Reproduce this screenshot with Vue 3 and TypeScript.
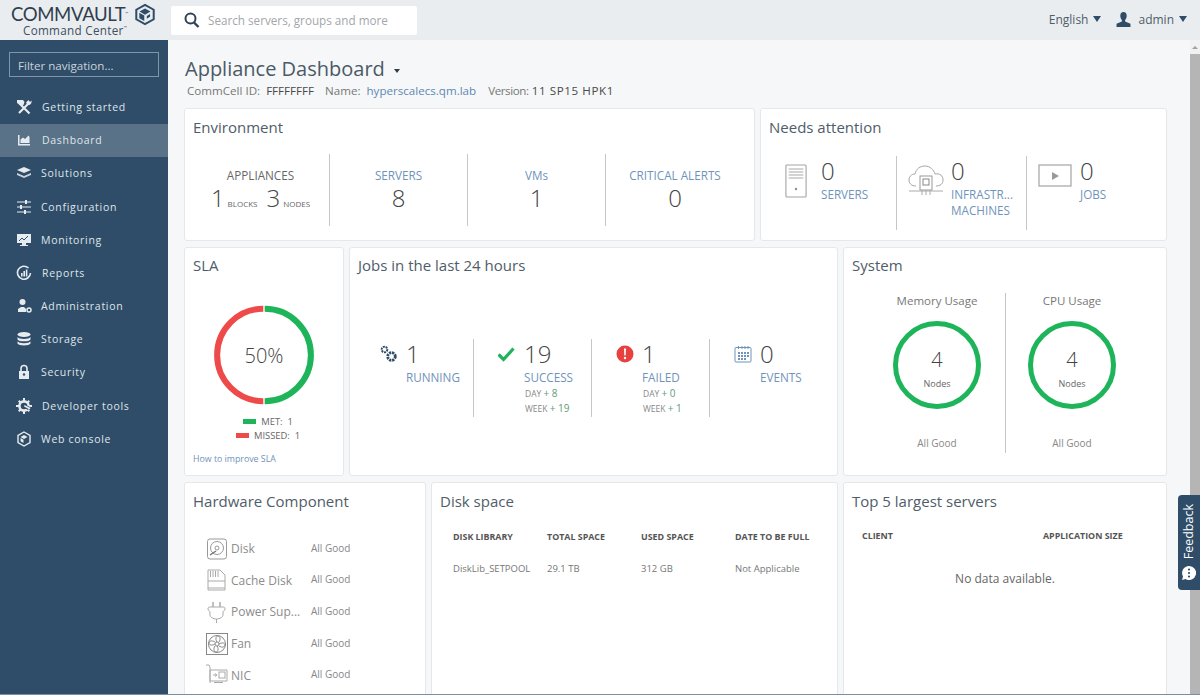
<script setup lang="ts">
interface Nav { label: string; icon: string; active?: boolean; indent?: boolean }

const navIcons: Record<string, string> = {
  tools: '<path d="M3.500 4.500L13.500 14.500M12.500 4.500L3 14" stroke="#e6ebef" stroke-width="2.200" fill="none"/><path d="M1 1h6l1.500 2-1 3H4L1 4zM15.500 1.500c.5 2.500-1 5-4 4.500L10 3.500 12.500 1l1.500 2z" fill="#e6ebef"/>',
  chart: '<path d="M2 3h1.500v9H14v1.500H2zM4.500 11V7.500L7 5.500l2 1.500 3.500-3.500 1 1.500v6z" fill="#e6ebef"/>',
  layers: '<path d="M8 2l7 3-7 3-7-3z" fill="#e6ebef"/><path d="M1 8l7 3 7-3v2l-7 3-7-3z" fill="#c9d3db"/>',
  sliders: '<path d="M1 3h14M1 8h14M1 13h14" stroke="#e6ebef" stroke-width="1.200"/><path d="M9 1h2v4H9zM4 6h2v4H4zM8 11h2v4H8z" fill="#e6ebef"/>',
  monitor: '<path d="M1 2h14v9H1z" fill="#e6ebef"/><path d="M3 9l3-3 2 2 4-4" stroke="#2f4d68" fill="none"/><path d="M6 11h4v2h2v1H4v-1h2z" fill="#e6ebef"/>',
  reports: '<path d="M12.500 3A6.500 6.500 0 1 0 14.500 8" fill="none" stroke="#e6ebef" stroke-width="1.600"/><path d="M5 8h1.600v3.500H5zM7.400 6h1.600v5.500H7.400zM9.800 4.500h1.600v7H9.800z" fill="#e6ebef"/>',
  admin: '<circle cx="6.500" cy="4" r="3" fill="#e6ebef"/><path d="M2 14v-3l3-2h3l2 2v3z" fill="#e6ebef"/><circle cx="13" cy="12" r="2" fill="none" stroke="#e6ebef" stroke-width="1.500"/>',
  storage: '<ellipse cx="8" cy="3.500" rx="6.500" ry="2.500" fill="#e6ebef"/><path d="M1.500 6c1 2.600 12 2.600 13 0v2.400c-1 2.600-12 2.600-13 0zM1.500 10.200c1 2.600 12 2.600 13 0v2.400c-1 2.600-12 2.600-13 0z" fill="#e6ebef"/>',
  lock: '<path d="M5 7V4.500a3 3 0 0 1 6 0V7" fill="none" stroke="#e6ebef" stroke-width="1.600"/><path d="M3 7h10v8H3z" fill="#e6ebef"/><circle cx="8" cy="10.500" r="1.200" fill="#2f4d68"/>',
  gear: '<circle cx="8" cy="8" r="4.600" fill="none" stroke="#e6ebef" stroke-width="2.600"/><path d="M7 0h2v3H7zM7 13h2v3H7zM0 7h3v2H0zM13 7h3v2h-3zM2 3.400l1.400-1.400 2 2L4 5.400zM10.600 12l1.400-1.400 2 2-1.400 1.400zM2 12.600L4 10.600l1.400 1.400-2 2zM10.600 4l2-2L14 3.400l-2 2z" fill="#e6ebef"/><path d="M8 6l6 3-2 3-5-3z" fill="#2f4d68"/><path d="M8.500 7l6 3-1 1.500-5.500-3z" fill="#e6ebef"/>',
  cube: '<path d="M8 1l6 3.500v7L8 15l-6-3.500v-7z" fill="none" stroke="#e6ebef" stroke-width="1.400"/><path d="M8 4l3.500 2-3.500 2-3.500-2zM4.500 7l3 1.800v3.200l-3-1.800z" fill="#e6ebef"/>',
}

const navItems: Nav[] = [
  { label: 'Getting started', icon: 'tools', indent: true },
  { label: 'Dashboard', icon: 'chart', active: true, indent: true },
  { label: 'Solutions', icon: 'layers' },
  { label: 'Configuration', icon: 'sliders' },
  { label: 'Monitoring', icon: 'monitor' },
  { label: 'Reports', icon: 'reports', indent: true },
  { label: 'Administration', icon: 'admin' },
  { label: 'Storage', icon: 'storage' },
  { label: 'Security', icon: 'lock' },
  { label: 'Developer tools', icon: 'gear', indent: true },
  { label: 'Web console', icon: 'cube' },
]

const envStats = [
  { label: 'SERVERS', value: '8' },
  { label: 'VMs', value: '1' },
  { label: 'CRITICAL ALERTS', value: '0' },
]

const systemStats = [
  { title: 'Memory Usage' },
  { title: 'CPU Usage' },
]

const hardware = [
  { name: 'Disk', icon: 'disk' },
  { name: 'Cache Disk', icon: 'cache' },
  { name: 'Power Sup...', icon: 'plug' },
  { name: 'Fan', icon: 'fan' },
  { name: 'NIC', icon: 'nic' },
]

const hwIcons: Record<string, string> = {
  disk: '<rect x="1.500" y="1" width="19" height="20" rx="2.500" fill="none" stroke="#999" /><circle cx="11" cy="10" r="6.500" fill="none" stroke="#999"/><circle cx="11" cy="10" r="2" fill="none" stroke="#999"/><path d="M4 17l6-4" stroke="#777" stroke-width="1.500"/>',
  cache: '<path d="M2 1h12l5 5v15H2z" fill="none" stroke="#aaa"/><path d="M4.500 2v6M7 2v6M9.500 2v6M12 2v6M2 12h17M2 19h17" stroke="#aaa"/>',
  plug: '<path d="M7 1v5M14 1v5" stroke="#aaa" stroke-width="1.500"/><path d="M2 8c0-2 1-2 3-2h11c2 0 3 0 3 2s-2 2-2 3v3c0 2-3 4-6.500 4S4 16 4 14v-3C4 10 2 10 2 8z" fill="none" stroke="#aaa"/><path d="M10.500 18v4" stroke="#aaa"/>',
  fan: '<rect x="0.500" y="0.500" width="21" height="21" fill="none" stroke="#888"/><circle cx="11" cy="11" r="8.500" fill="none" stroke="#888"/><circle cx="11" cy="11" r="2" fill="none" stroke="#888"/><path d="M11 9c-2-3-1-6 1-6s3 3 1 6M13 11c3-2 6-1 6 1s-3 3-6 1M11 13c2 3 1 6-1 6s-3-3-1-6M9 11c-3 2-6 1-6-1s3-3 6-1" fill="none" stroke="#888"/>',
  nic: '<path d="M0 1h3l1 2v16" fill="none" stroke="#aaa"/><path d="M4 6h17v11H4z" fill="none" stroke="#aaa"/><rect x="13" y="8" width="6" height="6" fill="none" stroke="#aaa"/><path d="M7 11h3M9 9.500l2 1.500-2 1.500M8 18.500h9" stroke="#aaa" fill="none"/>',
}
</script>

<template>
  <div class="app">
    <header class="topbar">
      <div class="brand">
        <div class="brand-text">
          <span class="brand-name">COMMVAULT<sup>™</sup></span>
          <span class="brand-sub">Command Center<sup>™</sup></span>
        </div>
        <svg class="brand-mark" viewBox="0 0 24 24" width="22" height="23">
          <path d="M12 1.500l9.500 5.300v10.400L12 22.500l-9.500-5.300V6.800z" fill="none" stroke="#2f4d68" stroke-width="2.200"/>
          <path d="M12 5.500l6 3.300-6 3.400-6-3.400z" fill="#2f4d68"/>
          <path d="M5.800 10l5.400 3.100v6l-5.400-3.100z" fill="#2f4d68"/>
          <path d="M14 13.500l3.500-2v3l-3.500 2z" fill="#2f4d68"/>
        </svg>
      </div>
      <div class="search">
        <svg viewBox="0 0 16 16" width="16" height="16">
          <circle cx="6.500" cy="6.500" r="5" fill="none" stroke="#2f4358" stroke-width="2"/>
          <path d="M10 10.500l4.500 4.500" stroke="#2f4358" stroke-width="2.400"/>
        </svg>
        <span>Search servers, groups and more</span>
      </div>
      <div class="top-right">
        <span class="top-label">English</span>
        <span class="tri"></span>
        <svg class="user" viewBox="0 0 14 14" width="15" height="15">
          <path d="M7 0c2 0 3 1.500 3 3.500S9 7 8.500 7.500v1.300L13.500 11v3H.5v-3l5-2.200V7.500C5 7 4 5.500 4 3.500S5 0 7 0z" fill="#2f4d68"/>
        </svg>
        <span class="top-label">admin</span>
        <span class="tri"></span>
      </div>
    </header>

    <div class="body">
      <aside class="sidebar">
        <div class="filter">Filter navigation...</div>
        <nav class="nav">
          <div
            v-for="item in navItems"
            :key="item.label"
            class="nav-item"
            :class="{ active: item.active, indent: item.indent }"
          >
            <svg class="nav-icon" viewBox="0 0 16 16" width="16" height="16" v-html="navIcons[item.icon]"></svg>
            <span>{{ item.label }}</span>
          </div>
        </nav>
      </aside>

      <main class="content">
        <div class="page-head">
          <h1>Appliance Dashboard <span class="caret"></span></h1>
          <p>
            <span>CommCell ID:</span><b>FFFFFFFF</b>
            <span>Name:</span><a>hyperscalecs.qm.lab</a>
            <span class="ver-label">Version:</span><b class="ver">11 SP15 HPK1</b>
          </p>
        </div>

        <section class="row row-1">
          <div class="card env">
            <h2>Environment</h2>
            <div class="env-cols">
              <div class="env-col">
                <div class="env-label plain">APPLIANCES</div>
                <div class="env-value">
                  1<small>BLOCKS</small><span class="spaced">3</span><small>NODES</small>
                </div>
              </div>
              <div v-for="s in envStats" :key="s.label" class="env-col">
                <div class="env-label">{{ s.label }}</div>
                <div class="env-value">{{ s.value }}</div>
              </div>
            </div>
          </div>

          <div class="card needs">
            <h2>Needs attention</h2>
            <div class="needs-cols">
              <div class="needs-col first">
                <svg viewBox="0 0 24 34" width="22" height="34" preserveAspectRatio="none">
                  <rect x="1" y="1" width="22" height="32" rx="1" fill="none" stroke="#a4a4a4" stroke-width="1.200"/>
                  <path d="M4 5h16M4 8h16M4 11h16M4 14h16" stroke="#a4a4a4"/>
                  <circle cx="12" cy="25" r="1.200" fill="#888"/>
                </svg>
                <div>
                  <div class="needs-num">0</div>
                  <div class="link-label">SERVERS</div>
                </div>
              </div>
              <div class="needs-col second">
                <svg viewBox="0 0 36 32" width="36" height="32">
                  <path d="M8 22c-5 0-7-3-7-6s2-6 6-6c1-5 5-8 10-8s9 4 10 8c5-1 8 2 8 6s-3 6-7 6" fill="none" stroke="#a4a4a4"/>
                  <rect x="12" y="12" width="12" height="14" fill="#fff" stroke="#999"/>
                  <rect x="15" y="15" width="6" height="6" fill="none" stroke="#888"/>
                  <path d="M1 27h34M14 26v5M18 26v5M22 26v5" stroke="#aaa"/>
                </svg>
                <div>
                  <div class="needs-num">0</div>
                  <div class="link-label wrap">INFRASTR...<br />MACHINES</div>
                </div>
              </div>
              <div class="needs-col third">
                <svg viewBox="0 0 34 24" width="34" height="24">
                  <rect x="1" y="1" width="32" height="21" fill="none" stroke="#a4a4a4" stroke-width="1.200"/>
                  <path d="M14 8l7 4-7 4z" fill="#999"/>
                </svg>
                <div>
                  <div class="needs-num">0</div>
                  <div class="link-label">JOBS</div>
                </div>
              </div>
            </div>
          </div>
        </section>

        <section class="row row-2">
          <div class="card sla">
            <h2>SLA</h2>
            <div class="ring-wrap">
              <svg viewBox="0 0 100 100" width="100" height="100">
                <path d="M50.700 3.800a46.200 46.200 0 0 1 0 92.400" fill="none" stroke="#1db45a" stroke-width="6"/>
                <path d="M49.300 96.200a46.200 46.200 0 0 1 0-92.400" fill="none" stroke="#ef4a4a" stroke-width="6"/>
              </svg>
              <span class="ring-text">50%</span>
            </div>
            <div class="legend">
              <div><i class="met"></i>MET:&nbsp; 1</div>
              <div><i class="missed"></i>MISSED:&nbsp; 1</div>
            </div>
            <a class="sla-link">How to improve SLA</a>
          </div>

          <div class="card jobs">
            <h2>Jobs in the last 24 hours</h2>
            <div class="jobs-cols">
              <div class="job">
                <svg viewBox="0 0 18 18" width="18" height="18">
                  <circle cx="4.500" cy="4.500" r="2.800" fill="none" stroke="#2f4d68" stroke-width="2" stroke-dasharray="2 .8"/>
                  <circle cx="11.500" cy="11.500" r="3.800" fill="none" stroke="#2f4d68" stroke-width="2.800" stroke-dasharray="2.200 .8"/>
                </svg>
                <div>
                  <div class="job-num">1</div>
                  <div class="link-label">RUNNING</div>
                </div>
              </div>
              <div class="job">
                <svg viewBox="0 0 18 18" width="18" height="18">
                  <path d="M.5 9.500l5 5L15.500 3.500" fill="none" stroke="#1db45a" stroke-width="3.200"/>
                </svg>
                <div>
                  <div class="job-num">19</div>
                  <div class="link-label">SUCCESS</div>
                  <div class="delta">DAY <em>+ 8</em></div>
                  <div class="delta">WEEK <em>+ 19</em></div>
                </div>
              </div>
              <div class="job">
                <svg viewBox="0 0 18 18" width="18" height="18">
                  <circle cx="9" cy="9" r="8.500" fill="#e8403f"/>
                  <path d="M8 3.500h2l-.3 7H8.300z" fill="#fff"/>
                  <circle cx="9" cy="13" r="1.200" fill="#fff"/>
                </svg>
                <div>
                  <div class="job-num">1</div>
                  <div class="link-label">FAILED</div>
                  <div class="delta">DAY <em>+ 0</em></div>
                  <div class="delta">WEEK <em>+ 1</em></div>
                </div>
              </div>
              <div class="job">
                <svg viewBox="0 0 18 18" width="18" height="18">
                  <rect x="1" y="2.500" width="16" height="14.500" rx="1" fill="none" stroke="#6f93bb"/>
                  <path d="M4.500 1v3M8 1v3M11 1v3M14 1v3" stroke="#6f93bb"/>
                  <path d="M4 7h2v2H4zM7 7h2v2H7zM10 7h2v2h-2zM13 7h2v2h-2zM4 10h2v2H4zM7 10h2v2H7zM10 10h2v2h-2zM13 10h2v2h-2zM4 13h2v2H4zM7 13h2v2H7zM10 13h2v2h-2z" fill="#6f93bb"/>
                </svg>
                <div>
                  <div class="job-num">0</div>
                  <div class="link-label">EVENTS</div>
                </div>
              </div>
            </div>
          </div>

          <div class="card system">
            <h2>System</h2>
            <div class="sys-cols">
              <div v-for="s in systemStats" :key="s.title" class="sys-col">
                <div class="sys-title">{{ s.title }}</div>
                <div class="sys-ring">
                  <svg viewBox="0 0 88 88" width="88" height="88">
                    <circle cx="44" cy="44" r="41.500" fill="none" stroke="#1db45a" stroke-width="5"/>
                  </svg>
                  <div class="sys-ring-text"><strong>4</strong><span>Nodes</span></div>
                </div>
                <div class="sys-good">All Good</div>
              </div>
            </div>
          </div>
        </section>

        <section class="row row-3">
          <div class="card hw">
            <h2>Hardware Component</h2>
            <ul class="hw-list">
              <li v-for="h in hardware" :key="h.name">
                <svg viewBox="0 0 22 22" width="22" height="22" v-html="hwIcons[h.icon]"></svg>
                <span class="hw-name">{{ h.name }}</span>
                <span class="hw-status">All Good</span>
              </li>
            </ul>
          </div>

          <div class="card disk">
            <h2>Disk space</h2>
            <table class="tbl">
              <thead>
                <tr><th>DISK LIBRARY</th><th>TOTAL SPACE</th><th>USED SPACE</th><th>DATE TO BE FULL</th></tr>
              </thead>
              <tbody>
                <tr><td>DiskLib_SETPOOL</td><td>29.1 TB</td><td>312 GB</td><td>Not Applicable</td></tr>
              </tbody>
            </table>
          </div>

          <div class="card top5">
            <h2>Top 5 largest servers</h2>
            <div class="top5-head"><span>CLIENT</span><span>APPLICATION SIZE</span></div>
            <div class="top5-empty">No data available.</div>
          </div>
        </section>
      </main>

      <div class="scrollbar">
        <span class="scroll-arrow"></span>
        <div class="scroll-thumb"></div>
      </div>

      <div class="feedback">
        <span>Feedback</span>
        <svg viewBox="0 0 14 14" width="14" height="14">
          <path d="M7 0a7 7 0 1 1-3.500 13L0 14l1-3.500A7 7 0 0 1 7 0z" fill="#fff"/>
          <circle cx="7" cy="3.500" r="1.100" fill="#2f4d68"/>
          <circle cx="7" cy="7" r="1.100" fill="#2f4d68"/>
          <circle cx="7" cy="10.500" r="1.100" fill="#2f4d68"/>
        </svg>
      </div>
    </div>
  </div>
</template>

<style>
html, body { margin: 0; padding: 0; background: #f6f7f8; }
</style>

<style scoped>
.app {
  width: 1200px;
  height: 695px;
  display: flex;
  flex-direction: column;
  overflow: hidden;
  font-family: "Open Sans", "Noto Sans", sans-serif;
  color: #555;
}

/* top bar */
.topbar {
  height: 40px;
  flex: none;
  display: flex;
  align-items: center;
  background: #e9edf0;
}
.brand {
  width: 171px;
  align-self: stretch;
  flex: none;
  display: flex;
  align-items: flex-start;
  box-sizing: border-box;
  padding: 3px 0 0 11px;
}
.brand-text { display: flex; flex-direction: column; width: 118px; padding-top: 3px; }
.brand-name {
  font-family: "Lato", sans-serif;
  font-size: 18.600px;
  line-height: 16px;
  font-weight: 400;
  letter-spacing: -0.4px;
  color: #2f3e4d;
  white-space: nowrap;
}
.brand-sub {
  font-size: 11.700px;
  line-height: 13px;
  letter-spacing: 0.3px;
  color: #3e4f5e;
  margin: 2px 0 0 12px;
  white-space: nowrap;
}
.brand sup { font-size: 4px; line-height: 0; vertical-align: 6px; letter-spacing: 0; }
.brand-mark { margin: 0 0 0 5px; }
.search {
  width: 246px;
  height: 29px;
  background: #fff;
  border-radius: 2px;
  display: flex;
  align-items: center;
  gap: 8px;
  box-sizing: border-box;
  padding-left: 13px;
  font-size: 11.700px;
  color: #a3a7ab;
}
.top-right {
  margin-left: auto;
  padding: 0 13px 2px 0;
  display: flex;
  align-items: center;
  font-size: 12px;
  color: #4f5d69;
}
.tri {
  width: 0;
  height: 0;
  border-left: 4px solid transparent;
  border-right: 4px solid transparent;
  border-top: 6px solid #2f4d68;
  margin-left: 5px;
}
.user { margin: 0 7px 0 15px; }

.body {
  flex: 1;
  min-height: 0;
  display: flex;
  position: relative;
  border-bottom: 1px solid #7c8fa2;
}

/* sidebar */
.sidebar {
  width: 168px;
  flex: none;
  background: #2f4d68;
  box-sizing: border-box;
  padding-top: 12px;
}
.filter {
  margin: 0 9px;
  height: 25px;
  line-height: 25px;
  box-sizing: border-box;
  border: 1px solid #7f95a8;
  padding-left: 8px;
  font-size: 11.600px;
  color: #c9d3db;
}
.nav { margin-top: 13.400px; }
.nav-item {
  height: 33.200px;
  display: flex;
  align-items: center;
  padding-left: 16px;
  gap: 9px;
  font-size: 10.500px;
  letter-spacing: 0.7px;
  color: #dfe5ea;
}
.nav-item.indent { gap: 10px; }
.nav-item.active { background: #5a7288; }
.nav-icon { flex: none; }

/* content */
.content {
  flex: 1;
  min-width: 0;
  overflow: hidden;
  box-sizing: border-box;
  padding: 0 23px 0 16px;
  display: flex;
  flex-direction: column;
  gap: 6px;
  background: #f6f7f8;
}
.page-head { height: 62px; flex: none; padding-left: 1px; }
.page-head h1 {
  margin: 0;
  padding-top: 15px;
  font-size: 20px;
  line-height: 28px;
  font-weight: 400;
  color: #4b5a66;
}
.caret {
  display: inline-block;
  width: 0;
  height: 0;
  border-left: 3.500px solid transparent;
  border-right: 3.500px solid transparent;
  border-top: 4px solid #2f3e4d;
  vertical-align: middle;
  margin-left: 4px;
}
.page-head p {
  margin: 0 0 0 2px;
  font-size: 11.600px;
  line-height: 16px;
  color: #777;
}
.page-head p span { margin-right: 6px; }
.page-head p span.ver-label { letter-spacing: -0.4px; margin-right: 3px; }
.page-head p b { font-weight: 400; color: #4a4a4a; margin-right: 11px; }
.page-head p b.ver { letter-spacing: 0.6px; }
.page-head p a { color: #5f87b3; margin-right: 12px; }

.row { display: flex; gap: 5px; flex: none; }
.row-1 { height: 133px; }
.row-2 { height: 229px; }
.row-3 { height: 240px; }

.card {
  box-sizing: border-box;
  background: #fff;
  border: 1px solid #e6e7e8;
  border-radius: 3px;
  padding: 6px 8px;
  flex: none;
}
.row-2 .card { padding-top: 5px; }
.card h2 {
  margin: 0;
  font-size: 15px;
  line-height: 24px;
  font-weight: 400;
  color: #4f5d69;
}
.link-label { font-size: 11.700px; line-height: 16px; color: #6f93bb; }

/* environment */
.env { width: 571px; }
.env-cols { display: flex; margin-top: 15px; margin-left: -1px; }
.env-col {
  width: 138px;
  height: 72px;
  box-sizing: border-box;
  border-right: 1px solid #c4c7ca;
  text-align: center;
  padding-top: 13px;
}
.env-col:last-child { border-right: none; }
.env-label { font-size: 11.700px; line-height: 16px; color: #6f93bb; }
.env-label.plain { color: #666; }
.env-value { font-size: 24px; line-height: 30px; font-weight: 300; color: #444; }
.env-value small { font-size: 8px; font-weight: 400; margin-left: 3px; color: #666; }
.spaced { margin-left: 9px; }

/* needs */
.needs { width: 407px; }
.needs-cols { display: flex; margin-top: 17px; }
.needs-col {
  height: 74px;
  box-sizing: border-box;
  display: flex;
  align-items: flex-start;
  gap: 14px;
  border-right: 1px solid #c4c7ca;
}
.needs-col svg { margin-top: 8px; flex: none; }
.needs-col.first { width: 128px; padding-left: 16px; }
.needs-col.second { width: 130px; padding-left: 11px; gap: 7px; }
.needs-col.third { border-right: none; padding-left: 11px; gap: 8px; }
.needs-num { font-size: 24px; line-height: 31px; margin-top: -1px; font-weight: 300; color: #444; }
.link-label.wrap { line-height: 16px; }

/* SLA */
.sla { width: 160px; position: relative; }
.ring-wrap { position: relative; width: 100px; height: 100px; margin: 28px auto 0; }
.ring-text {
  position: absolute;
  inset: 0;
  display: flex;
  align-items: center;
  justify-content: center;
  font-size: 20px;
  font-weight: 300;
  color: #444;
}
.legend { margin-top: 10px; padding-left: 8px; font-size: 9.400px; line-height: 14px; color: #666; text-align: center; }
.legend i { display: inline-block; width: 13px; height: 5px; margin-right: 5px; vertical-align: 1px; }
.legend .met { background: #1db45a; }
.legend .missed { background: #ef4a4a; }
.sla-link { display: block; margin-top: 9px; font-size: 8.800px; line-height: 14px; color: #6f93bb; }

/* jobs */
.jobs { width: 489px; }
.jobs-cols { display: flex; margin-top: 62px; margin-left: -2px; }
.job {
  width: 118px;
  height: 78px;
  box-sizing: border-box;
  display: flex;
  align-items: flex-start;
  padding-left: 24px;
  gap: 8px;
  border-right: 1px solid #c4c7ca;
}
.job:last-child { border-right: none; }
.job svg { margin-top: 6px; flex: none; }
.job-num { font-size: 24px; line-height: 30px; font-weight: 300; color: #444; }
.delta { font-size: 8.500px; line-height: 15px; color: #888; padding-left: 1px; }
.delta em { font-style: normal; font-size: 10px; color: #5e9c7a; }
.job .link-label { line-height: 17px; }

/* system */
.system { width: 324px; }
.sys-cols { display: flex; margin-top: 16px; }
.sys-col {
  height: 160px;
  box-sizing: border-box;
  display: flex;
  flex-direction: column;
  align-items: center;
}
.sys-col:first-child { border-right: 1px solid #c4c7ca; width: 154px; padding-left: 17px; }
.sys-col:last-child { width: 132px; }
.sys-title { font-size: 11.500px; line-height: 16px; color: #777; }
.sys-ring { position: relative; width: 88px; height: 88px; margin-top: 12px; }
.sys-ring-text {
  position: absolute;
  inset: 0;
  display: flex;
  flex-direction: column;
  align-items: center;
  padding-top: 26px;
}
.sys-ring-text strong { font-size: 20px; line-height: 26px; font-weight: 300; color: #444; }
.sys-ring-text span { font-size: 9px; line-height: 12px; margin-top: 5px; color: #666; }
.sys-good { margin-top: 27px; font-size: 10px; line-height: 14px; color: #888; }

/* hardware */
.hw { width: 242px; }
.hw-list { list-style: none; margin: 20px 0 0 13px; padding: 0; }
.hw-list li { height: 31.600px; display: flex; align-items: center; }
.hw-list svg { flex: none; width: 22px; }
.hw-name { width: 80px; margin-left: 3px; font-size: 12px; color: #8c8c8c; white-space: nowrap; }
.hw-status { font-size: 10px; color: #888; padding-bottom: 2px; }

/* disk */
.disk { width: 407px; }
.tbl { border-collapse: collapse; margin: 15px 0 0 13px; table-layout: fixed; width: 376px; }
.tbl th {
  text-align: left;
  font-size: 8.900px;
  font-weight: 700;
  color: #555;
  padding: 0;
  height: 16px;
  width: 94px;
  white-space: nowrap;
}
.tbl td {
  font-size: 9.500px;
  color: #777;
  padding: 18px 0 0;
  white-space: nowrap;
}

/* top 5 */
.top5 { width: 324px; }
.top5-head {
  display: flex;
  margin: 15px 0 0 10px;
  font-size: 8.900px;
  line-height: 16px;
  font-weight: 700;
  color: #555;
}
.top5-head span:first-child { width: 181px; }
.top5-empty { margin-top: 27px; text-align: center; font-size: 12px; line-height: 16px; color: #666; }

/* scrollbar + feedback */
.scrollbar {
  width: 10px;
  flex: none;
  background: #f1f1f1;
  position: relative;
}
.scroll-arrow {
  position: absolute;
  top: 6px;
  left: 2px;
  width: 0;
  height: 0;
  border-left: 3px solid transparent;
  border-right: 3px solid transparent;
  border-bottom: 3px solid #a0a0a0;
}
.scroll-thumb { position: absolute; top: 14px; left: 0; right: 0; bottom: 0; background: #b5b5b5; }
.feedback {
  position: absolute;
  right: 0;
  top: 455px;
  width: 22px;
  height: 95px;
  background: #2f4d68;
  border-radius: 4px 0 0 4px;
  display: flex;
  flex-direction: column;
  align-items: center;
  justify-content: flex-end;
  padding-bottom: 10px;
  box-sizing: border-box;
  gap: 7px;
  color: #fff;
}
.feedback span {
  writing-mode: vertical-rl;
  transform: rotate(180deg);
  font-size: 12.500px;
  line-height: 22px;
}
</style>
